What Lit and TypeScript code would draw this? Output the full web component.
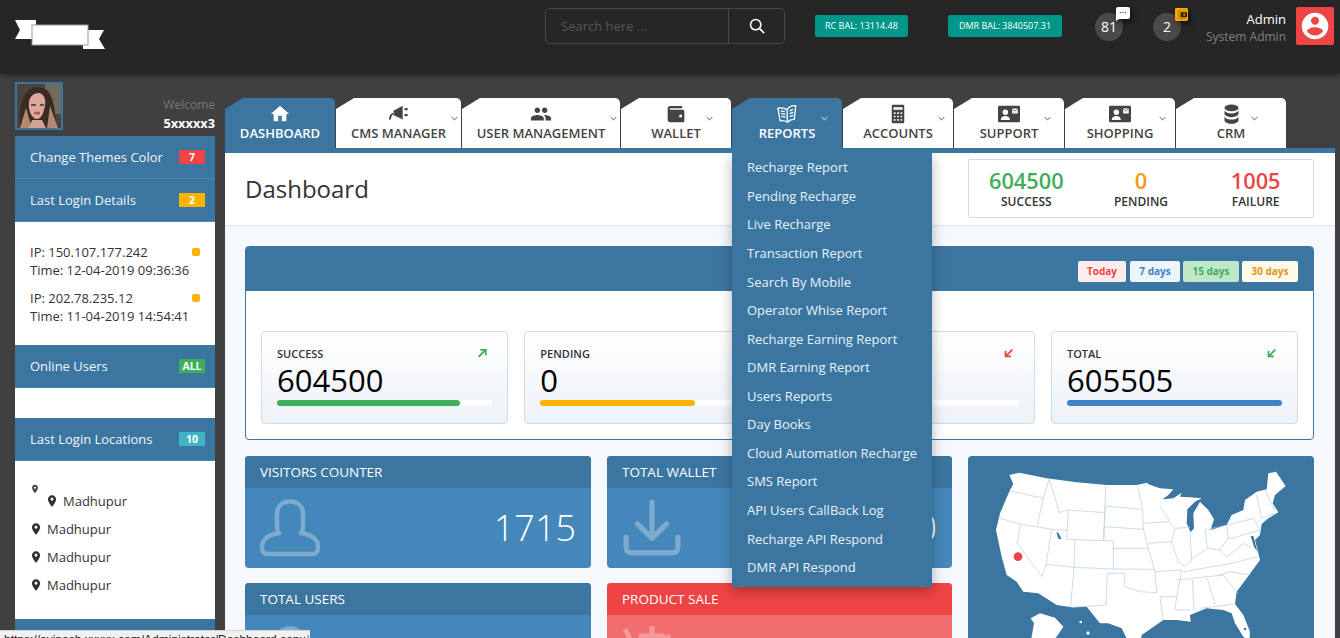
import { LitElement, html, css, svg } from "lit";
import { customElement } from "lit/decorators.js";

const M = (d: string, s = 24) => svg`<svg viewBox="0 0 ${s} ${s}" fill="currentColor"><path d=${d}></path></svg>`;
const I: Record<string, any> = {
  home: M("M10 20v-6h4v6h5v-8h3L12 3 2 12h3v8z"),
  horn: svg`<svg viewBox="0 0 24 20" fill="currentColor"><path d="M7 6l9-5v15l-9-4.500H6V6z"></path><rect x="18" y="3.500" width="3.400" height="2.400"></rect><rect x="18" y="10" width="3.400" height="2.400"></rect><path d="M1 16c0-3.500 1.400-6 4-7.500l.8 2C4 11.500 3.200 13.500 3.200 16z"></path></svg>`,
  users: M("M16 11c1.660 0 2.990-1.340 2.990-3S17.660 5 16 5c-1.660 0-3 1.340-3 3s1.340 3 3 3zm-8 0c1.660 0 2.990-1.340 2.990-3S9.660 5 8 5C6.340 5 5 6.340 5 8s1.340 3 3 3zm0 2c-2.330 0-7 1.170-7 3.500V19h14v-2.500c0-2.330-4.670-3.500-7-3.500zm8 0c-.29 0-.62.02-.97.05 1.160.84 1.970 1.970 1.970 3.450V19h6v-2.500c0-2.330-4.670-3.500-7-3.500z"),
  wallet: svg`<svg viewBox="0 0 24 24" fill="currentColor"><path fill-rule="evenodd" d="M5 2.500h13c1 0 1.500.6 1.500 1.500v1H5.500a1 1 0 0 0 0 2H20c1.200 0 2 .8 2 2v11c0 1.200-.8 2-2 2H5c-1.700 0-3-1.300-3-3V5.500c0-1.700 1.300-3 3-3zM17.500 12.500a1.800 1.800 0 1 0 0 3.600 1.800 1.800 0 0 0 0-3.600z"></path></svg>`,
  book: svg`<svg viewBox="0 0 24 22" fill="none" stroke="currentColor" stroke-width="1.400" stroke-linejoin="round"><path d="M12 6.500C9.500 4.500 6 3.800 2 4.500l2.500 14c3-.6 5.500-.2 8 1.500 1.800-2 4.300-2.900 7.500-3.300L21.500 2c-4-.4-7.500 1-9.500 4.500zM12 6.500l.5 13.500"></path><path d="M5 7.500l4.500 1M5.500 10.500l4.500 1M6 13.500l4.500 1M15 7.500l3.500-1.500M15 10.500l4-1.200M15 13.500l4-1"></path></svg>`,
  calc: svg`<svg viewBox="0 0 16 24" fill="currentColor"><path fill-rule="evenodd" d="M2 1h12a1.500 1.500 0 0 1 1.500 1.500v19A1.500 1.500 0 0 1 14 23H2A1.500 1.500 0 0 1 .5 21.500v-19A1.500 1.500 0 0 1 2 1zm.5 3v3h11V4zM3 10v2h2v-2zm4 0v2h2v-2zm4 0v2h2v-2zm-8 4v2h2v-2zm4 0v2h2v-2zm4 0v2h2v-2zm-8 4v2h2v-2zm4 0v2h2v-2zm4 0v2h2v-2z"></path></svg>`,
  card: svg`<svg viewBox="0 0 24 20" fill="currentColor"><path fill-rule="evenodd" d="M1.500 1h21A1.500 1.500 0 0 1 24 2.500v15a1.500 1.500 0 0 1-1.500 1.500h-21A1.500 1.500 0 0 1 0 17.500v-15A1.500 1.500 0 0 1 1.500 1zM8 5a3 3 0 1 0 0 6 3 3 0 0 0 0-6zM3 16.500h10c0-2.500-2.200-4.200-5-4.200s-5 1.700-5 4.200zM15.500 4v5.500h6V4z"></path><path d="M16 4.800l2.500 2 2.500-2" fill="none" stroke="currentColor" stroke-width=".8"></path></svg>`,
  db: svg`<svg viewBox="0 0 18 24" fill="currentColor"><ellipse cx="9" cy="4.500" rx="8" ry="3.800"></ellipse><path d="M1 7.500c1.200 2.500 4.500 3.300 8 3.300s6.800-.8 8-3.300v4c-1 2.500-4.500 3.500-8 3.500s-7-1-8-3.500z"></path><path d="M1 14.500c1.200 2.500 4.500 3.300 8 3.300s6.800-.8 8-3.300v4.500c-1 2.500-4.500 3.500-8 3.500s-7-1-8-3.500z"></path></svg>`,
  account: M("M12 2C6.480 2 2 6.480 2 12s4.480 10 10 10 10-4.480 10-10S17.520 2 12 2zm0 3c1.660 0 3 1.340 3 3s-1.340 3-3 3-3-1.340-3-3 1.340-3 3-3zm0 14.200c-2.500 0-4.710-1.280-6-3.220.03-1.990 4-3.080 6-3.080 1.990 0 5.970 1.090 6 3.080-1.290 1.940-3.500 3.220-6 3.220z"),
  pin: M("M12 2C8.130 2 5 5.130 5 9c0 5.250 7 13 7 13s7-7.750 7-13c0-3.870-3.130-7-7-7zm0 9.500a2.500 2.500 0 1 1 0-5 2.500 2.500 0 0 1 0 5z"),
  chev: svg`<svg viewBox="0 0 10 6" fill="none" stroke="currentColor" stroke-width="1.300"><path d="M1 1l4 4 4-4"></path></svg>`,
  search: svg`<svg viewBox="0 0 18 18" fill="none" stroke="currentColor" stroke-width="1.800"><circle cx="7.500" cy="7.500" r="5.800"></circle><path d="M12 12l5 5"></path></svg>`,
  person: svg`<svg viewBox="0 0 60 58" fill="none" stroke="currentColor" stroke-width="4.500" stroke-linejoin="round"><path d="M30 2.500c-8 0-13 5-13 13v13c0 2 .6 4 2 5.500-6 1-11 3-14 6-2 2-3 4-3 7v2c0 3 2 6 5 6h46c3 0 5-3 5-6v-2c0-3-1-5-3-7-3-3-8-5-14-6 1.400-1.500 2-3.500 2-5.500v-13c0-8-5-13-13-13z"></path></svg>`,
  download: svg`<svg viewBox="0 0 56 56" fill="none" stroke="currentColor" stroke-width="5" stroke-linecap="round" stroke-linejoin="round"><path d="M28 3v34M14 24l14 14 14-14M3 37v9c0 4 2 6 6 6h38c4 0 6-2 6-6v-9"></path></svg>`,
  basket: svg`<svg viewBox="0 0 60 56" fill="none" stroke="currentColor" stroke-width="5" stroke-linecap="round"><path d="M4 4l10 20M30 0v22M19 9h22M46 10l-8 16M4 26h52"></path></svg>`,
  up: svg`<svg viewBox="0 0 12 12" fill="none" stroke="currentColor" stroke-width="2.200"><path d="M2 10.500l8-8M4 2.200h6.500v6.500"></path></svg>`,
  dl: svg`<svg viewBox="0 0 12 12" fill="none" stroke="currentColor" stroke-width="2.200"><path d="M10 2l-8 8M1.800 3.500V10h6.500"></path></svg>`,
  chat: svg`<svg viewBox="0 0 14 14"><path d="M2 0h10a2 2 0 0 1 2 2v8a2 2 0 0 1-2 2H3l-3 2V2a2 2 0 0 1 2-2z" fill="#fff"></path><circle cx="4.500" cy="5.500" r=".8" fill="#666"></circle><circle cx="7" cy="5.500" r=".8" fill="#666"></circle><circle cx="9.500" cy="5.500" r=".8" fill="#666"></circle></svg>`,
  purse: svg`<svg viewBox="0 0 14 14"><rect width="14" height="14" rx="1.500" fill="#ffa800"></rect><path d="M3 2.500h9v1.500H5v6.500h7V12H3z" fill="#3a2a00" opacity=".25"></path><path fill-rule="evenodd" d="M6 4.500h7v5.500H6zM9 6.200v2h2v-2z" fill="#2a2000"></path></svg>`,
};

const tabs = [
  { l: "DASHBOARD", i: "home", w: 110, s: 22, active: true },
  { l: "CMS MANAGER", i: "horn", w: 125, s: 22, c: 3 },
  { l: "USER MANAGEMENT", i: "users", w: 158, s: 22, c: 3 },
  { l: "WALLET", i: "wallet", w: 110, s: 20, c: 18 },
  { l: "REPORTS", i: "book", w: 110, s: 22, c: 14, active: true },
  { l: "ACCOUNTS", i: "calc", w: 110, s: 20, c: 8 },
  { l: "SUPPORT", i: "card", w: 110, s: 22, c: 13 },
  { l: "SHOPPING", i: "card", w: 110, s: 22, c: 9 },
  { l: "CRM", i: "db", w: 110, s: 21, c: 28 },
];
const reports = ["Recharge Report","Pending Recharge","Live Recharge","Transaction Report","Search By Mobile","Operator Whise Report","Recharge Earning Report","DMR Earning Report","Users Reports","Day Books","Cloud Automation Recharge","SMS Report","API Users CallBack Log","Recharge API Respond","DMR API Respond"];
const stats = [
  { l: "SUCCESS", v: "604500", cls: "green" },
  { l: "PENDING", v: "0", cls: "orange" },
  { l: "FAILURE", v: "1005", cls: "red" },
];
const ranges = [["Today","r1"],["7 days","r2"],["15 days","r3"],["30 days","r4"]];
const cards = [
  { l: "SUCCESS", v: "604500", p: 85, col: "#3fae5b", a: "up", ac: "#3fae5b" },
  { l: "PENDING", v: "0", p: 72, col: "#ffb300", a: "up", ac: "#ffb300" },
  { l: "FAILURE", v: "1005", p: 0, col: "#ef4444", a: "dl", ac: "#ef4444" },
  { l: "TOTAL", v: "605505", p: 100, col: "#3f84c5", a: "dl", ac: "#3fae5b" },
];
const logins = [["IP: 150.107.177.242","Time: 12-04-2019 09:36:36"],["IP: 202.78.235.12","Time: 11-04-2019 14:54:41"]];

const usMap = svg`<svg class="map" viewBox="24 18 1038 600">
<path fill="#fff" d="M148 75L178 68L260 85L350 97L440 105L530 105L562 98L565 103L600 115L640 118L625 135L608 148L640 145L665 128L660 140L690 142L725 145L705 155L682 178L680 220L692 247L702 235L700 190L720 155L745 180L762 208L752 240L800 225L815 195L850 180L855 150L890 125L920 118L925 70L948 65L977 108L945 135L938 160L955 187L925 205L905 222L900 255L885 270L900 330L860 385L830 425L825 462L850 495L870 545L868 575L850 560L825 520L815 490L790 480L740 475L690 495L692 515L650 510L610 510L545 555L540 590L505 575L485 535L445 520L420 520L380 470L335 472L290 465L235 430L190 425L170 395L140 375L125 320L108 240L120 190L150 120L160 102Z"></path>
<path fill="#fff" d="M240 490L285 503L310 530L290 560L250 600L210 600L215 560L222 520L212 505Z"></path>
<circle cx="362" cy="516" r="4" fill="#fff"></circle><circle cx="384" cy="549" r="5" fill="#fff"></circle>
<g fill="none" stroke="#b3cbe0" stroke-width="2">
<path d="M150 122L250 145M268 86L250 145L232 225M118 205L182 222L275 238L320 242M268 88L290 160L298 188L325 180L435 188M325 180L320 268L430 272L435 170M437 105L432 272M435 168L545 178M432 230L550 238M533 105L548 178L550 238L565 295M430 272L460 273L460 357L585 358M460 295L565 295L585 365M345 268L342 352L460 357M275 238L258 345L245 380M182 222L172 280L245 380M258 343L342 352L332 470M442 370L438 465L335 472M442 370L493 370L493 410L540 425L590 428L585 365M550 220L625 215M600 170L630 215M565 280L635 275M625 215L645 235L635 275L655 335L675 350M645 235L690 232M690 250L695 330L675 350M735 240L742 295M695 325L745 295L780 300M735 240L800 225L805 265L780 300M670 365L815 340L895 320M650 390L790 375M585 365L665 360L650 440L600 440M650 440L645 480L690 480M600 440L610 510M697 390L702 480M742 385L765 465M720 475L825 462M770 378L810 365L870 375M790 375L835 430M800 225L880 205L900 240L815 265M890 135L905 205M905 205L945 190M915 120L945 185M780 300L800 322L850 280L870 290M805 265L815 265"></path></g>
<g fill="#3b76a1"><path d="M289 246L296 250L305 268L295 266Z"></path><path d="M872 258L880 258L892 305L882 290Z"></path><circle cx="855" cy="537" r="4"></circle></g>
<circle cx="174" cy="320" r="13" fill="#ef4444"></circle></svg>`;

const avatar = svg`<svg class="face" viewBox="0 0 44 44"><defs><filter id="soft"><feGaussianBlur stdDeviation=".7"></feGaussianBlur></filter></defs><rect width="44" height="44" fill="#4a4440"></rect><rect x="28" width="16" height="30" fill="#6f6a62"></rect>
<g filter="url(#soft)"><path d="M3 44C1 24 5 3 21 3c13 0 17 14 18 41z" fill="#3e2a22"></path><path d="M3 44l6-20 6 20zM30 44l3-22 8 22z" fill="#b08a72"></path>
<path d="M12 18c1-6 5-9 10-9 5 1 7 6 6 12-1 8-4 14-8 14-5 0-9-8-8-17z" fill="#dba89b"></path><path d="M15 36h10l4 8H12z" fill="#d2a496"></path>
<path d="M14 21h5M23 21h4" stroke="#4c5560" stroke-width="2"></path><path d="M17 29h6" stroke="#b0565e" stroke-width="2.500"></path></g></svg>`;

@customElement("app-root")
export class AppRoot extends LitElement {
  static styles = css`
    :host { display: block; position: relative; width: 1340px; height: 638px; overflow: hidden; background: #404040; font-family: "Open Sans", sans-serif; color: #333; }
    svg { display: block; width: 100%; height: 100%; }
    header { height: 73px; background: #262626; box-shadow: 0 2px 6px rgba(0,0,0,.55); display: flex; align-items: flex-start; position: relative; z-index: 2; }
    .logo { width: 90px; height: 34px; margin: 19px 0 0 15px; flex: none; }
    .search { margin: 8px 0 0 440px; width: 240px; height: 36px; box-sizing: border-box; border: 1px solid #484848; border-radius: 5px; display: flex; flex: none; }
    .search .ph { width: 183px; box-sizing: border-box; padding-left: 15px; line-height: 34px; font-size: 13px; color: #555; border-right: 1px solid #484848; }
    .search .btn { flex: 1; display: flex; align-items: center; justify-content: center; color: #fff; }
    .search .btn span { width: 16px; height: 16px; }
    .bal { flex: none; height: 22px; margin-top: 15px; background: #009688; color: #fff; border-radius: 2px; font-size: 9px; line-height: 22px; text-align: center; }
    .rc { width: 93px; margin-left: 30px; }
    .dmr { width: 114px; margin-left: 40px; }
    .circle { flex: none; position: relative; width: 28px; height: 28px; margin-top: 13px; border-radius: 50%; background: #4a4a4a; color: #fff; font-size: 14px; line-height: 28px; text-align: center; }
    .c1 { margin-left: 33px; } .c2 { margin-left: 30px; }
    .tag { position: absolute; left: 21px; top: -6px; width: 14px; height: 14px; filter: drop-shadow(2px 3px 3px rgba(0,0,0,.6)); }
    .tag.o { left: 22px; top: -5px; width: 13px; height: 13px; }
    .who { flex: 1; text-align: right; padding-top: 10px; }
    .who .a { font-size: 13px; line-height: 18px; color: #fff; }
    .who .b { font-size: 12px; line-height: 18px; color: #808080; }
    .me { flex: none; width: 38px; height: 38px; margin: 7px 6px 0 10px; background: #ef4444; border-radius: 2px; color: #fff; padding: 3px; box-sizing: border-box; }

    .body { display: grid; grid-template-columns: 200px 1110px; column-gap: 10px; padding-left: 15px; }
    .side { padding-top: 9px; }
    .top { display: flex; justify-content: space-between; height: 54px; }
    .ava { width: 48px; height: 48px; box-sizing: border-box; border: 2px solid #3b76a1; }
    .wel { text-align: right; padding-top: 14px; }
    .wel .w { font-size: 12px; line-height: 17px; color: #777; }
    .wel .n { font-size: 12.800px; line-height: 20px; font-weight: 700; color: #fff; }
    .si { height: 42px; background: #3b76a1; color: #f0f5f9; display: flex; align-items: center; justify-content: space-between; padding: 0 10px 0 15px; font-size: 13px; border-bottom: 1px solid #4487ba; }
    .bdg { width: 26px; height: 14px; font-size: 10.500px; font-weight: 700; line-height: 14px; text-align: center; color: #fff; }
    .wh { background: #fff; }
    .login { height: 123px; box-sizing: border-box; padding: 21px 15px 0; font-size: 13px; color: #333; }
    .lg { position: relative; line-height: 18px; margin-bottom: 10px; }
    .lg i { position: absolute; left: 162px; top: 5px; width: 8px; height: 8px; border-radius: 2px; background: #ffb300; }
    .gap { height: 30px; }
    .locs { height: 158px; box-sizing: border-box; padding: 23px 15px 0; font-size: 13px; color: #333; }
    .small { width: 10px; height: 10px; color: #444; }
    .loc { display: flex; align-items: center; gap: 4px; height: 28px; }
    .loc span { width: 14px; height: 14px; color: #333; margin-left: -1px; }
    .loc.first { margin: -7px 0 0 16px; }

    .main { padding-top: 25px; }
    .tabs { display: flex; gap: 1px; height: 50px; }
    .tab { position: relative; flex: none; height: 50px; background: #fff; color: #444; border-top-right-radius: 5px; clip-path: polygon(18px 0, 100% 0, 100% 100%, 0 100%, 0 11px); display: flex; flex-direction: column; align-items: center; }
    .tab.on { background: #3b76a1; color: #fff; }
    .tab .ic { height: 27px; display: flex; align-items: center; justify-content: center; padding-top: 5px; box-sizing: border-box; }
    .tab .lb { font-size: 13px; font-weight: 600; line-height: 17px; white-space: nowrap; }
    .tab .ch { position: absolute; top: 18px; width: 7px; height: 5px; }
    .bar { height: 5px; background: #3b76a1; }
    .phead { height: 73px; box-sizing: border-box; background: #fff; border-bottom: 1px solid #d8e3ee; display: flex; justify-content: space-between; padding: 6px 21px 0 20px; }
    h1 { margin: 10px 0 0; font-size: 24px; font-weight: 400; line-height: 40px; color: #333; }
    .sum { width: 346px; height: 59px; box-sizing: border-box; border: 1px solid #cfdcea; border-radius: 2px; display: grid; grid-template-columns: repeat(3, 1fr); text-align: center; padding-top: 8px; }
    .sum b { display: block; font-size: 21.800px; line-height: 26px; font-weight: 600; }
    .sum span { display: block; font-size: 12px; line-height: 15px; font-weight: 600; color: #333; }
    .green { color: #3fae5b; } .orange { color: #f09a16; } .red { color: #ef4444; }
    .content { background: #f5f8fc; padding: 20px 21px 0 20px; height: 420px; box-sizing: border-box; }
    .panel { height: 194px; box-sizing: border-box; background: #fff; border: 1px solid #3b76a1; border-radius: 4px; }
    .phd { height: 44px; background: #3b76a1; display: flex; justify-content: flex-end; gap: 3px; padding: 14px 15px 0 0; box-sizing: border-box; }
    .rg { height: 21px; border-radius: 2px; font-size: 10px; line-height: 21px; font-weight: 700; text-align: center; }
    .r1 { width: 48px; margin-right: 1px; background: #fdecec; color: #ef4444; } .r2 { width: 50px; background: #edf4fb; color: #3f84c5; } .r3 { width: 56px; background: #bfe8c9; color: #3fae5b; } .r4 { width: 56px; background: #fff9ec; color: #e09a16; }
    .cards { display: grid; grid-template-columns: repeat(4, 1fr); column-gap: 16.330px; padding: 40px 15px 0; }
    .cd { height: 93px; box-sizing: border-box; border: 1px solid #cfdcea; border-radius: 4px; background: linear-gradient(#fff, #edf2f7); padding: 14px 15px 0; position: relative; }
    .cd .l { font-size: 11px; font-weight: 600; line-height: 16px; color: #333; }
    .cd .v { font-size: 31px; line-height: 37px; color: #000; }
    .cd .tr { height: 6px; background: #fff; border-radius: 3px; margin-top: 1px; }
    .cd .fl { height: 6px; border-radius: 3px; }
    .cd .ar { position: absolute; right: 20px; top: 16px; width: 10px; height: 10px; }
    .grid { display: grid; grid-template-columns: 346px 345px 346px; column-gap: 16px; margin-top: 16px; grid-template-rows: 112px 112px; row-gap: 15px; }
    .box { border-radius: 4px; overflow: hidden; background: #4487ba; color: #fff; }
    .box .h { height: 32px; background: #3b76a1; font-size: 13.500px; line-height: 32px; padding-left: 15px; }
    .box .bd { height: 80px; display: flex; justify-content: space-between; padding: 11px 15px; box-sizing: border-box; }
    .box .ico { width: 60px; height: 58px; color: rgba(255,255,255,.3); }
    .box .val { font-size: 36px; font-weight: 300; line-height: 58px; }
    .box.hot { background: #f26d6d; } .box.hot .h { background: #ef4444; }
    .mapbox { grid-column: 3; grid-row: 1 / span 2; background: #3b76a1; border-radius: 4px; overflow: hidden; height: 200px; }
    .mapbox .map { width: 346px; height: 200px; }

    .drop { position: absolute; left: 732px; top: 153px; width: 200px; height: 434px; box-sizing: border-box; padding-top: .3px; background: #3b76a1; box-shadow: 0 4px 12px rgba(0,0,0,.3); clip-path: inset(0 -20px -20px -20px); z-index: 3; }
    .drop div { height: 28.570px; line-height: 28.570px; padding-left: 15px; font-size: 13px; color: #e8f1f7; white-space: nowrap; }
    .status { position: absolute; left: 0; top: 630px; width: 310px; height: 8px; background: #f1f1f1; border-top: 1px solid #d5d5d5; font: 12px "Liberation Sans", sans-serif; color: #222; padding: 2px 0 0 4px; box-sizing: border-box; overflow: hidden; white-space: nowrap; z-index: 4; }
    .face { width: 44px; height: 44px; }
  `;

  render() {
    return html`
      <header>
        <div class="logo"><svg viewBox="0 0 90 34"><path d="M0 1h21v19H0l5-9z" fill="#fff"></path><path d="M68 11h21l-5 9 6 10H68z" fill="#fff"></path><rect x="17" y="6" width="56" height="20" fill="#fff" stroke="#999" stroke-width="1"></rect></svg></div>
        <div class="search"><div class="ph">Search here ...</div><div class="btn"><span>${I.search}</span></div></div>
        <div class="bal rc">RC BAL: 13114.48</div>
        <div class="bal dmr">DMR BAL: 3840507.31</div>
        <div class="circle c1">81<div class="tag">${I.chat}</div></div>
        <div class="circle c2">2<div class="tag o">${I.purse}</div></div>
        <div class="who"><div class="a">Admin</div><div class="b">System Admin</div></div>
        <div class="me">${I.account}</div>
      </header>
      <div class="body">
        <aside class="side">
          <div class="top"><div class="ava">${avatar}</div><div class="wel"><div class="w">Welcome</div><div class="n">5xxxxx3</div></div></div>
          <div class="si"><span>Change Themes Color</span><span class="bdg" style="background:#ef4444">7</span></div>
          <div class="si"><span>Last Login Details</span><span class="bdg" style="background:#ffb300">2</span></div>
          <div class="wh login">${logins.map((l) => html`<div class="lg">${l[0]}<i></i><br />${l[1]}</div>`)}</div>
          <div class="si"><span>Online Users</span><span class="bdg" style="background:#3fae5b">ALL</span></div>
          <div class="wh gap"></div>
          <div class="si"><span>Last Login Locations</span><span class="bdg" style="background:#3fb5c4">10</span></div>
          <div class="wh locs">
            <div class="small">${I.pin}</div>
            <div class="loc first"><span>${I.pin}</span>Madhupur</div>
            <div class="loc"><span>${I.pin}</span>Madhupur</div>
            <div class="loc"><span>${I.pin}</span>Madhupur</div>
            <div class="loc"><span>${I.pin}</span>Madhupur</div>
          </div>
          <div class="si"></div>
        </aside>
        <main class="main">
          <nav class="tabs">
            ${tabs.map((t) => html`<div class="tab ${t.active ? "on" : ""}" style="width:${t.w}px">
              <div class="ic"><span style="display:block;width:${t.s}px;height:${t.s}px">${I[t.i]}</span></div>
              <div class="lb">${t.l}</div>
              ${t.c ? html`<span class="ch" style="right:${t.c}px">${I.chev}</span>` : ""}
            </div>`)}
          </nav>
          <div class="bar"></div>
          <div class="phead">
            <h1>Dashboard</h1>
            <div class="sum">${stats.map((s) => html`<div><b class=${s.cls}>${s.v}</b><span>${s.l}</span></div>`)}</div>
          </div>
          <div class="content">
            <section class="panel">
              <div class="phd">${ranges.map((r) => html`<div class="rg ${r[1]}">${r[0]}</div>`)}</div>
              <div class="cards">${cards.map((c) => html`<div class="cd">
                <div class="l">${c.l}</div><div class="v">${c.v}</div>
                <div class="tr"><div class="fl" style="width:${c.p}%;background:${c.col}"></div></div>
                <span class="ar" style="color:${c.ac}">${I[c.a]}</span>
              </div>`)}</div>
            </section>
            <section class="grid">
              <div class="box"><div class="h">VISITORS COUNTER</div><div class="bd"><div class="ico">${I.person}</div><div class="val">1715</div></div></div>
              <div class="box"><div class="h">TOTAL WALLET</div><div class="bd"><div class="ico">${I.download}</div><div class="val">12000</div></div></div>
              <div class="mapbox">${usMap}</div>
              <div class="box"><div class="h">TOTAL USERS</div><div class="bd"><div class="ico">${I.person}</div><div class="val"></div></div></div>
              <div class="box hot"><div class="h">PRODUCT SALE</div><div class="bd"><div class="ico">${I.basket}</div><div class="val"></div></div></div>
            </section>
          </div>
        </main>
      </div>
      <div class="drop">${reports.map((r) => html`<div>${r}</div>`)}</div>
      <div class="status">https://avinash.xxxxx.com/Administrator/Dashboard.aspx#</div>
    `;
  }
}
